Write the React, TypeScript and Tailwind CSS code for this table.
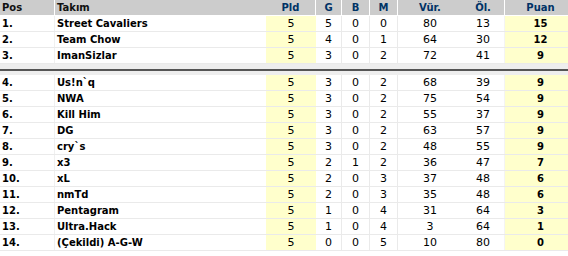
const rows = [
  { pos: '1.', team: 'Street Cavaliers', pld: 5, g: 5, b: 0, m: 0, vur: 80, ol: 13, puan: 15 },
  { pos: '2.', team: 'Team Chow', pld: 5, g: 4, b: 0, m: 1, vur: 64, ol: 30, puan: 12 },
  { pos: '3.', team: 'ImanSizlar', pld: 5, g: 3, b: 0, m: 2, vur: 72, ol: 41, puan: 9 },
  { pos: '4.', team: 'Us!n`q', pld: 5, g: 3, b: 0, m: 2, vur: 68, ol: 39, puan: 9 },
  { pos: '5.', team: 'NWA', pld: 5, g: 3, b: 0, m: 2, vur: 75, ol: 54, puan: 9 },
  { pos: '6.', team: 'Kill Him', pld: 5, g: 3, b: 0, m: 2, vur: 55, ol: 37, puan: 9 },
  { pos: '7.', team: 'DG', pld: 5, g: 3, b: 0, m: 2, vur: 63, ol: 57, puan: 9 },
  { pos: '8.', team: 'cry`s', pld: 5, g: 3, b: 0, m: 2, vur: 48, ol: 55, puan: 9 },
  { pos: '9.', team: 'x3', pld: 5, g: 2, b: 1, m: 2, vur: 36, ol: 47, puan: 7 },
  { pos: '10.', team: 'xL', pld: 5, g: 2, b: 0, m: 3, vur: 37, ol: 48, puan: 6 },
  { pos: '11.', team: 'nmTd', pld: 5, g: 2, b: 0, m: 3, vur: 35, ol: 48, puan: 6 },
  { pos: '12.', team: 'Pentagram', pld: 5, g: 1, b: 0, m: 4, vur: 31, ol: 64, puan: 3 },
  { pos: '13.', team: 'Ultra.Hack', pld: 5, g: 1, b: 0, m: 4, vur: 3, ol: 64, puan: 1 },
  { pos: '14.', team: '(Çekildi) A-G-W', pld: 5, g: 0, b: 0, m: 5, vur: 10, ol: 80, puan: 0 },
];

type Row = (typeof rows)[number];

function TableRow({ r }: { r: Row }) {
  return (
    <div className="flex h-[16px] border-b border-[#eaeaea] text-[11px] leading-[16px] text-black">
      <div className="w-[55px] shrink-0 border-r border-[#f0f0f0] pl-[2px] text-[10px] font-bold">{r.pos}</div>
      <div className="w-[211px] shrink-0 pl-[2px] text-[10px] font-bold">{r.team}</div>
      <div className="w-[50px] shrink-0 bg-[#ffffcc] text-center">{r.pld}</div>
      <div className="w-[26px] shrink-0 border-r border-[#eaeaea] text-center">{r.g}</div>
      <div className="w-[28px] shrink-0 border-r border-[#eaeaea] text-center">{r.b}</div>
      <div className="w-[28px] shrink-0 border-r border-[#eaeaea] text-center">{r.m}</div>
      <div className="w-[64px] shrink-0 text-center">{r.vur}</div>
      <div className="w-[43px] shrink-0 border-r border-[#f4f4f4] text-center">{r.ol}</div>
      <div className="w-[71px] shrink-0 bg-[#ffffcc] text-center text-[10px] font-bold">{r.puan}</div>
    </div>
  );
}

export default function App() {
  return (
    <div className="h-[256px] w-[568px] overflow-hidden bg-white" style={{ fontFamily: '"DejaVu Sans", Verdana, sans-serif' }}>
      <div className="w-[576px]">
        {/* Header */}
        <div className="flex h-[16px] border-b border-white bg-[#cccccc] text-[10px] font-bold leading-[15px]">
          <div className="w-[55px] shrink-0 border-r border-white pl-[2px] text-[#111]">Pos</div>
          <div className="w-[211px] shrink-0 pl-[2px] text-[#111]">Takım</div>
          <div className="w-[50px] shrink-0 border-r border-white text-center text-[#003366]">Pld</div>
          <div className="w-[26px] shrink-0 border-r border-white text-center text-[#003366]">G</div>
          <div className="w-[28px] shrink-0 border-r border-white text-center text-[#003366]">B</div>
          <div className="w-[28px] shrink-0 border-r border-white text-center text-[#003366]">M</div>
          <div className="w-[64px] shrink-0 text-center text-[#003366]">Vür.</div>
          <div className="w-[43px] shrink-0 border-r border-white text-center text-[#003366]">Öl.</div>
          <div className="w-[71px] shrink-0 text-center text-[#003366]">Puan</div>
        </div>

        {rows.slice(0, 3).map((r) => (
          <TableRow key={r.pos} r={r} />
        ))}

        {/* Promotion line */}
        <div className="flex h-[11px] flex-col bg-[#eeeeee]">
          <div className="h-[5px]" />
          <div className="h-[2px] bg-[#555555]" />
        </div>

        {rows.slice(3).map((r) => (
          <TableRow key={r.pos} r={r} />
        ))}
      </div>
    </div>
  );
}
